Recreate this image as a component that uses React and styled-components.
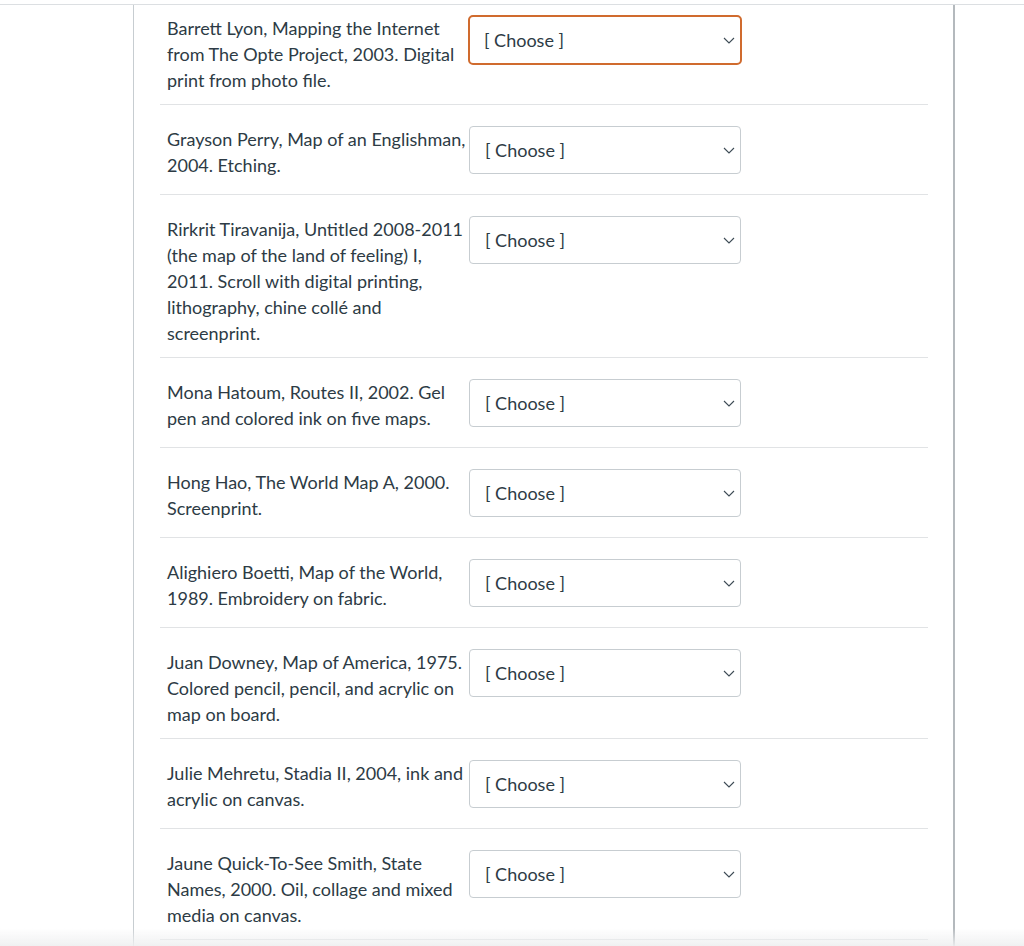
import React from 'react';
import styled, {createGlobalStyle, css} from "styled-components";

const GlobalStyle = createGlobalStyle`
  html, body {
    margin: 0;
    padding: 0;
    background: #ffffff;
    overflow: hidden;
  }
  body {
    font-family: Lato, "Open Sans", "Liberation Sans", sans-serif;
    color: #2d3b45;
  }
`

const Page = styled.div`
  padding-top: 4px;
  height: 100vh;
  box-sizing: border-box;
`

const TopRule = styled.div`
  border-top: 1px solid #dcdfe2;
  height: 100%;
  box-sizing: border-box;
`

const Column = styled.div`
  margin-left: 133px;
  width: 822px;
  height: 100%;
  box-sizing: border-box;
  border-left: 1px solid #c7cdd1;
  border-right: 2px solid #b4b9bd;
  padding: 0 25px 0 26px;
`

const Row = styled.div`
  display: flex;
  align-items: flex-start;
  padding: ${props => props.first ? '11px' : '21px'} 0 11px 0;
  border-bottom: 1px solid #e1e3e5;
`

const Prompt = styled.div`
  width: 309px;
  padding: 0 0 0 7px;
  margin-top: ${props => props.first ? '-1px' : '0'};
  font-size: 18px;
  line-height: 26px;
  box-sizing: border-box;
  flex-shrink: 0;
`

const SelectBox = styled.div`
  position: relative;
  width: 272px;
  height: 48px;
  margin-bottom: 9px;
  box-sizing: border-box;
  border: 1px solid #c7cdd1;
  border-radius: 4px;
  display: flex;
  align-items: center;
  padding-left: 15px;
  font-size: 18px;
  color: #2d3b45;
  background: #ffffff;

  ${props => props.focused && css`
    border: 2px solid #d06b2e;
    border-radius: 5px;
    padding-left: 14px;
    width: 274px;
    height: 50px;
    margin-top: -1px;
    margin-left: -1px;
  `}
`

const Chevron = styled.svg`
  position: absolute;
  right: 5px;
  top: 50%;
  margin-top: -3px;
`

const BottomFade = styled.div`
  position: fixed;
  left: 0;
  right: 0;
  bottom: 0;
  height: 18px;
  background: linear-gradient(to bottom, rgba(240, 241, 242, 0), rgba(238, 239, 240, 0.9));
  pointer-events: none;
`

const items = [
    'Barrett Lyon, Mapping the Internet from The Opte Project, 2003. Digital print from photo file.',
    'Grayson Perry, Map of an Englishman, 2004. Etching.',
    'Rirkrit Tiravanija, Untitled 2008-2011 (the map of the land of feeling) I, 2011. Scroll with digital printing, lithography, chine collé and screenprint.',
    'Mona Hatoum, Routes II, 2002. Gel pen and colored ink on five maps.',
    'Hong Hao, The World Map A, 2000. Screenprint.',
    'Alighiero Boetti, Map of the World, 1989. Embroidery on fabric.',
    'Juan Downey, Map of America, 1975. Colored pencil, pencil, and acrylic on map on board.',
    'Julie Mehretu, Stadia II, 2004, ink and acrylic on canvas.',
    'Jaune Quick-To-See Smith, State Names, 2000. Oil, collage and mixed media on canvas.',
]

const App = () => {
    return (
        <Page>
            <GlobalStyle/>
            <TopRule>
                <Column>
                    {items.map((text, i) => (
                        <Row key={i} first={i === 0}>
                            <Prompt first={i === 0}>{text}</Prompt>
                            <SelectBox focused={i === 0}>
                                [ Choose ]
                                <Chevron width="12" height="7" viewBox="0 0 12 7">
                                    <path d="M1 1 L6 6 L11 1" fill="none" stroke="#3d4b55" strokeWidth="1.1"/>
                                </Chevron>
                            </SelectBox>
                        </Row>
                    ))}
                </Column>
            </TopRule>
            <BottomFade/>
        </Page>
    );
};

export default App;
